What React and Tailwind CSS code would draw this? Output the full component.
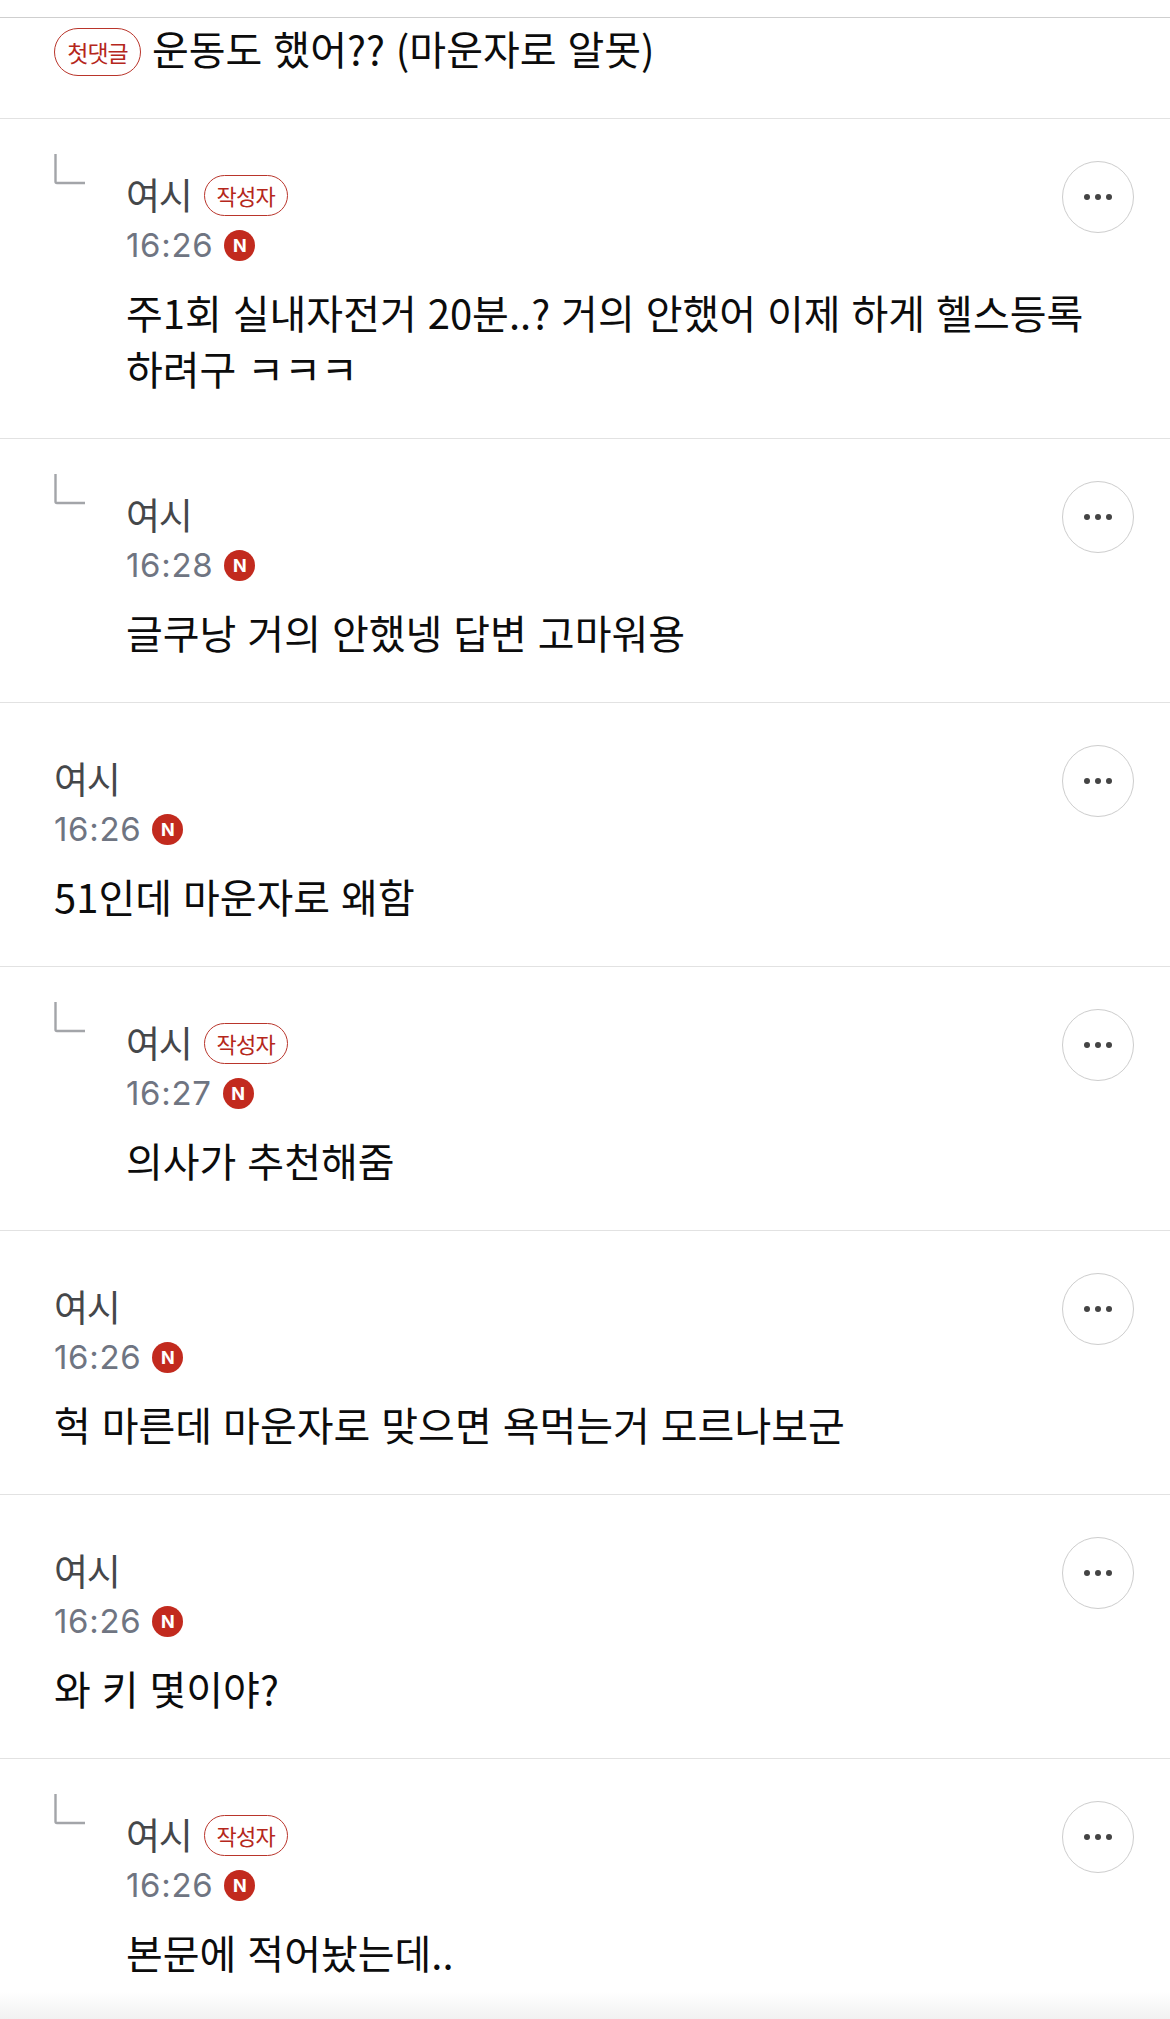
const font = { fontFamily: '"Noto Sans CJK KR", "Liberation Sans", sans-serif' };

function Row({ reply, author, time, lines }) {
  return (
    <div className="flex border-t-[1px] border-[#e2e2e2] pt-[42px] pr-[36px] pl-[54px]">
      {reply && (
        <svg className="shrink-0 mt-[-8px] mr-[40px]" width="32" height="32" viewBox="0 0 32 32" fill="none">
          <path d="M1.5 1V28.5Q1.5 30 3 30H31" stroke="#a3a5a9" strokeWidth="2.4" />
        </svg>
      )}
      <div className="flex-1 min-w-0 pt-[8px]">
        <div className="flex items-center h-[50px] gap-[12px]">
          <span className="text-[37px] leading-[50px] text-[#45474a] tracking-[-1.2px]">여시</span>
          {author && (
            <span className="flex items-center justify-center w-[84px] h-[41px] rounded-full border-[1.5px] border-[#b9352b] text-[22px] text-[#b5271c] tracking-[-0.8px] mt-[2px]">
              작성자
            </span>
          )}
        </div>
        <div className="flex items-center h-[42px] mt-[5px] gap-[11px]">
          <span className="text-[33px] leading-[42px] text-[#6f7582] tracking-[0.7px]" style={{ fontFamily: '"Inter", sans-serif' }}>{time}</span>
          <span className="flex items-center justify-center w-[31px] h-[31px] rounded-full bg-[#c22a1e] text-white text-[18px] font-bold" style={{ fontFamily: '"Inter", sans-serif' }}>N</span>
        </div>
        <div className="mt-[18px] pb-[42px] text-[40px] leading-[56px] text-[#0c0c0c] [word-spacing:2px] whitespace-pre">{lines}</div>
      </div>
      <button className="shrink-0 ml-[16px] w-[72px] h-[72px] rounded-full border-[1.5px] border-[#cdcdcd] flex items-center justify-center gap-[4.6px] bg-white">
        <span className="w-[6px] h-[6px] rounded-full bg-[#444444]" />
        <span className="w-[6px] h-[6px] rounded-full bg-[#444444]" />
        <span className="w-[6px] h-[6px] rounded-full bg-[#444444]" />
      </button>
    </div>
  );
}

export default function App() {
  return (
    <div className="relative w-[1170px] h-[2019px] overflow-hidden bg-white" style={font}>
      <div className="h-[17px]" />
      <div className="h-[101px] border-t-[1.5px] border-[#cfcfcf] pl-[54px] flex items-start pt-[4px] gap-[11px]">
        <span className="flex items-center justify-center w-[87px] h-[48px] mt-[6px] rounded-full border-[1.5px] border-[#b9352b] text-[23px] text-[#b5271c] tracking-[-1px]">첫댓글</span>
        <span className="text-[40px] leading-[52px] text-[#0c0c0c] [word-spacing:2px]">운동도 했어?? (마운자로 알못)</span>
      </div>
      <Row reply author time="16:26" lines={"주1회 실내자전거 20분..? 거의 안했어 이제 하게 헬스등록\n하려구 ㅋㅋㅋ"} />
      <Row reply time="16:28" lines="글쿠낭 거의 안했넹 답변 고마워용" />
      <Row time="16:26" lines="51인데 마운자로 왜함" />
      <Row reply author time="16:27" lines="의사가 추천해줌" />
      <Row time="16:26" lines="헉 마른데 마운자로 맞으면 욕먹는거 모르나보군" />
      <Row time="16:26" lines="와 키 몇이야?" />
      <Row reply author time="16:26" lines="본문에 적어놨는데.." />
      <div className="absolute bottom-0 left-0 right-0 h-[28px] bg-gradient-to-b from-[#ffffff00] to-[#f1f1f1]" />
    </div>
  );
}
